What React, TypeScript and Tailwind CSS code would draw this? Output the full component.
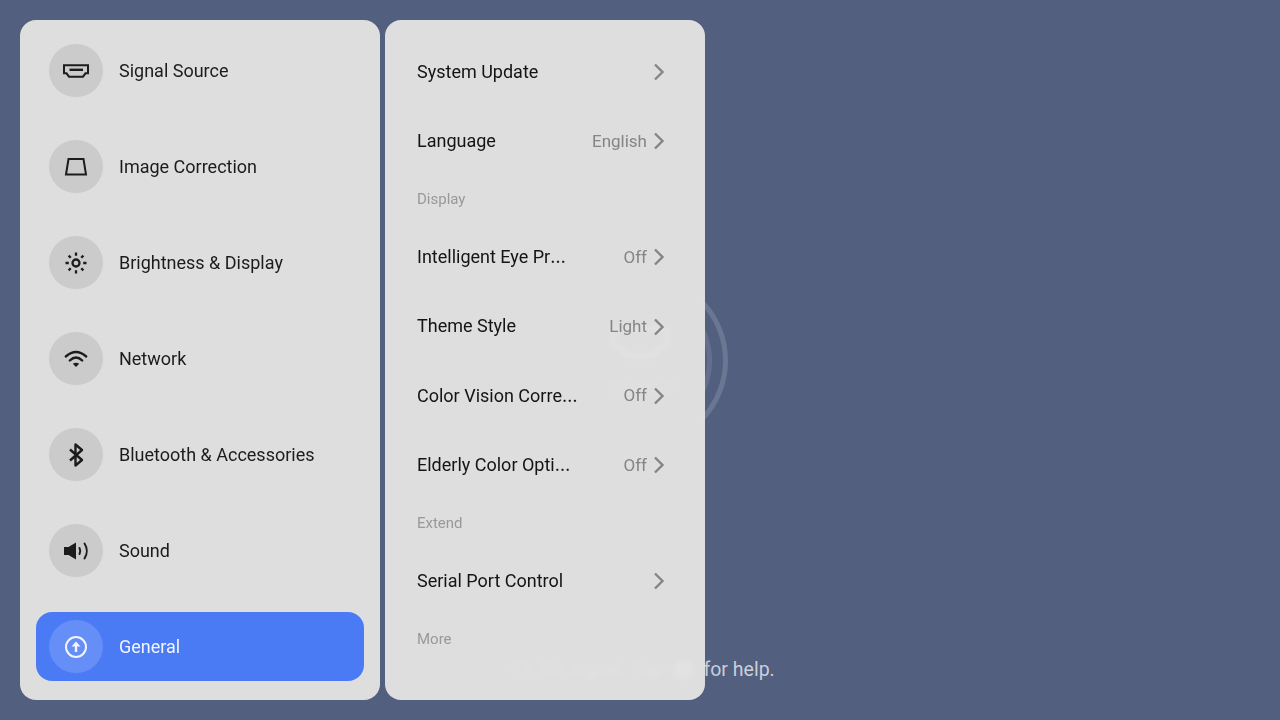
import type { ReactNode } from "react";

const FONT = "font-['Roboto','Noto_Sans',sans-serif]";

const HdmiIcon = () => (
  <svg width="28" height="28" viewBox="0 0 28 28" fill="none" stroke="currentColor" strokeWidth="2">
    <path d="M2 8.300h24v8h-2.500L21 19.700H7l-2.500-3.400H2z" />
    <path strokeWidth="2.400" d="M7.500 12.800h13.500" />
  </svg>
);

const KeystoneIcon = () => (
  <svg width="28" height="28" viewBox="0 0 28 28" fill="none" stroke="currentColor" strokeWidth="2">
    <path d="M6.500 6h15l2.500 15.500H4z" />
  </svg>
);

const SunIcon = () => (
  <svg width="28" height="28" viewBox="0 0 28 28" fill="none" stroke="currentColor" strokeWidth="2.300">
    <circle cx="14" cy="14" r="3.500" />
    <path d="M14 3.500v3.300M14 21.200v3.300M3.500 14h3.300M21.200 14h3.300M6.600 6.600l2.200 2.200M19.200 19.200l2.200 2.200M6.600 21.400l2.200-2.200M19.200 8.800l2.200-2.200" />
  </svg>
);

const WifiIcon = () => (
  <svg width="28" height="28" viewBox="0 0 28 28" fill="none" stroke="currentColor" strokeWidth="2.400">
    <path strokeLinecap="round" d="M3.800 11.500Q14 2.500 24.200 11.500" />
    <path strokeLinecap="round" d="M7.800 15.500Q14 9.500 20.200 15.500" />
    <path fill="currentColor" stroke="none" d="M10.800 18.800Q14 16.500 17.200 18.800L14 22z" />
  </svg>
);

const BluetoothIcon = () => (
  <svg width="28" height="28" viewBox="0 0 28 28" fill="none" stroke="currentColor" strokeWidth="2.400">
    <path d="M8 8.500 20 19l-6.500 5.500v-21L20 9 8 19.500" strokeLinejoin="round" />
  </svg>
);

const SoundIcon = () => (
  <svg width="28" height="28" viewBox="0 0 28 28" fill="none" stroke="currentColor" strokeWidth="2">
    <path fill="currentColor" stroke="none" d="M2 10h4.500L14 5.500v17L6.500 18H2z" />
    <path strokeLinecap="round" d="M17.500 11c1 2 1 4 0 6" />
    <path strokeLinecap="round" d="M22.500 6.500c3 4.500 3 10.500 0 15" />
  </svg>
);

const UpdateIcon = () => (
  <svg width="28" height="28" viewBox="0 0 28 28" fill="none" stroke="currentColor" strokeWidth="2">
    <circle cx="14" cy="14" r="10" />
    <path fill="currentColor" stroke="none" d="M14 8.500l4.500 5h-3.300v5.500h-2.400v-5.500H9.500z" />
  </svg>
);

const Chevron = () => (
  <svg width="12" height="20" viewBox="0 0 12 20" fill="none" stroke="#858585" strokeWidth="2.400" className="shrink-0">
    <path d="M2 2.500 9.500 10 2 17.500" />
  </svg>
);

function NavRow({ icon, label, active }: { icon: ReactNode; label: string; active?: boolean }) {
  return (
    <div
      className={`flex h-[69.33px] items-center gap-[16.33px] rounded-[16px] px-[13.33px] ${active ? "bg-[#4a7bf5] text-[#f2f5fe]" : "text-[#1c1c1c]"}`}
    >
      <div
        className={`flex h-[53.33px] w-[53.33px] items-center justify-center rounded-full ${active ? "bg-white/15" : "bg-[#cbcbcb]"}`}
      >
        {icon}
      </div>
      <span className="text-[18px]">{label}</span>
    </div>
  );
}

function SetRow({ label, value, cut }: { label: string; value?: string; cut?: boolean }) {
  return (
    <div className="flex h-[69.33px] items-center gap-[6px] pt-px">
      <span className="min-w-0 flex-1 -translate-y-px truncate text-[18px] text-[#141414]">
        {label}
        {cut && <span className="font-['Inter',sans-serif]">…</span>}
      </span>
      {value && <span className="text-[17px] text-[#858585]">{value}</span>}
      <Chevron />
    </div>
  );
}

const SectionLabel = ({ children }: { children: string }) => (
  <div className="flex h-[46.67px] items-center pt-px text-[15px] text-[#999999]">{children}</div>
);

export default function App() {
  return (
    <div className={`relative flex h-[720px] w-[1280px] gap-[5px] overflow-hidden bg-[#525f7f] p-5 ${FONT}`}>
      {/* no-signal screen behind the panels */}
      <div className="absolute left-[553px] top-[273px] h-[175px] w-[175px] rounded-full border-[5px] border-white/15" />
      <div className="absolute left-[569px] top-[289px] h-[143px] w-[143px] rounded-full border-[5px] border-white/10" />
      <svg className="absolute left-[610px] top-[326px] text-white/70" width="60" height="34" viewBox="0 0 60 34" fill="none" stroke="currentColor" strokeWidth="5">
        <path d="M3 3h54v18h-7l-6 9H16l-6-9H3z" />
      </svg>
      <div className="absolute left-[608px] top-[372px] text-[20px] text-white/70">HDMI 2</div>
      <div className="absolute left-[512px] top-[656px] flex items-center gap-[10px] text-[19.5px] leading-7 text-[#c9cedb]">
        <div className="h-[18px] w-[18px] rounded-full border-2 border-white/70" />
        <span>No signal. Tap</span>
        <div className="h-5 w-5 rounded-full bg-white/70" />
        <span>for help.</span>
      </div>

      <div className="relative flex h-[680px] w-[360px] flex-col gap-[26.67px] rounded-[16px] bg-[rgba(227,226,225,0.97)] p-4 backdrop-blur-[2px]">
        <NavRow icon={<HdmiIcon />} label="Signal Source" />
        <NavRow icon={<KeystoneIcon />} label="Image Correction" />
        <NavRow icon={<SunIcon />} label="Brightness & Display" />
        <NavRow icon={<WifiIcon />} label="Network" />
        <NavRow icon={<BluetoothIcon />} label="Bluetooth & Accessories" />
        <NavRow icon={<SoundIcon />} label="Sound" />
        <NavRow icon={<UpdateIcon />} label="General" active />
      </div>

      <div className="relative h-[680px] w-[320px] rounded-[16px] bg-[rgba(227,226,225,0.97)] pl-8 pr-10 pt-[17px] backdrop-blur-[2px]">
        <SetRow label="System Update" />
        <SetRow label="Language" value="English" />
        <SectionLabel>Display</SectionLabel>
        <SetRow label="Intelligent Eye Pr" value="Off" cut />
        <SetRow label="Theme Style" value="Light" />
        <SetRow label="Color Vision Corre" value="Off" cut />
        <SetRow label="Elderly Color Opti" value="Off" cut />
        <SectionLabel>Extend</SectionLabel>
        <SetRow label="Serial Port Control" />
        <SectionLabel>More</SectionLabel>
      </div>
    </div>
  );
}
